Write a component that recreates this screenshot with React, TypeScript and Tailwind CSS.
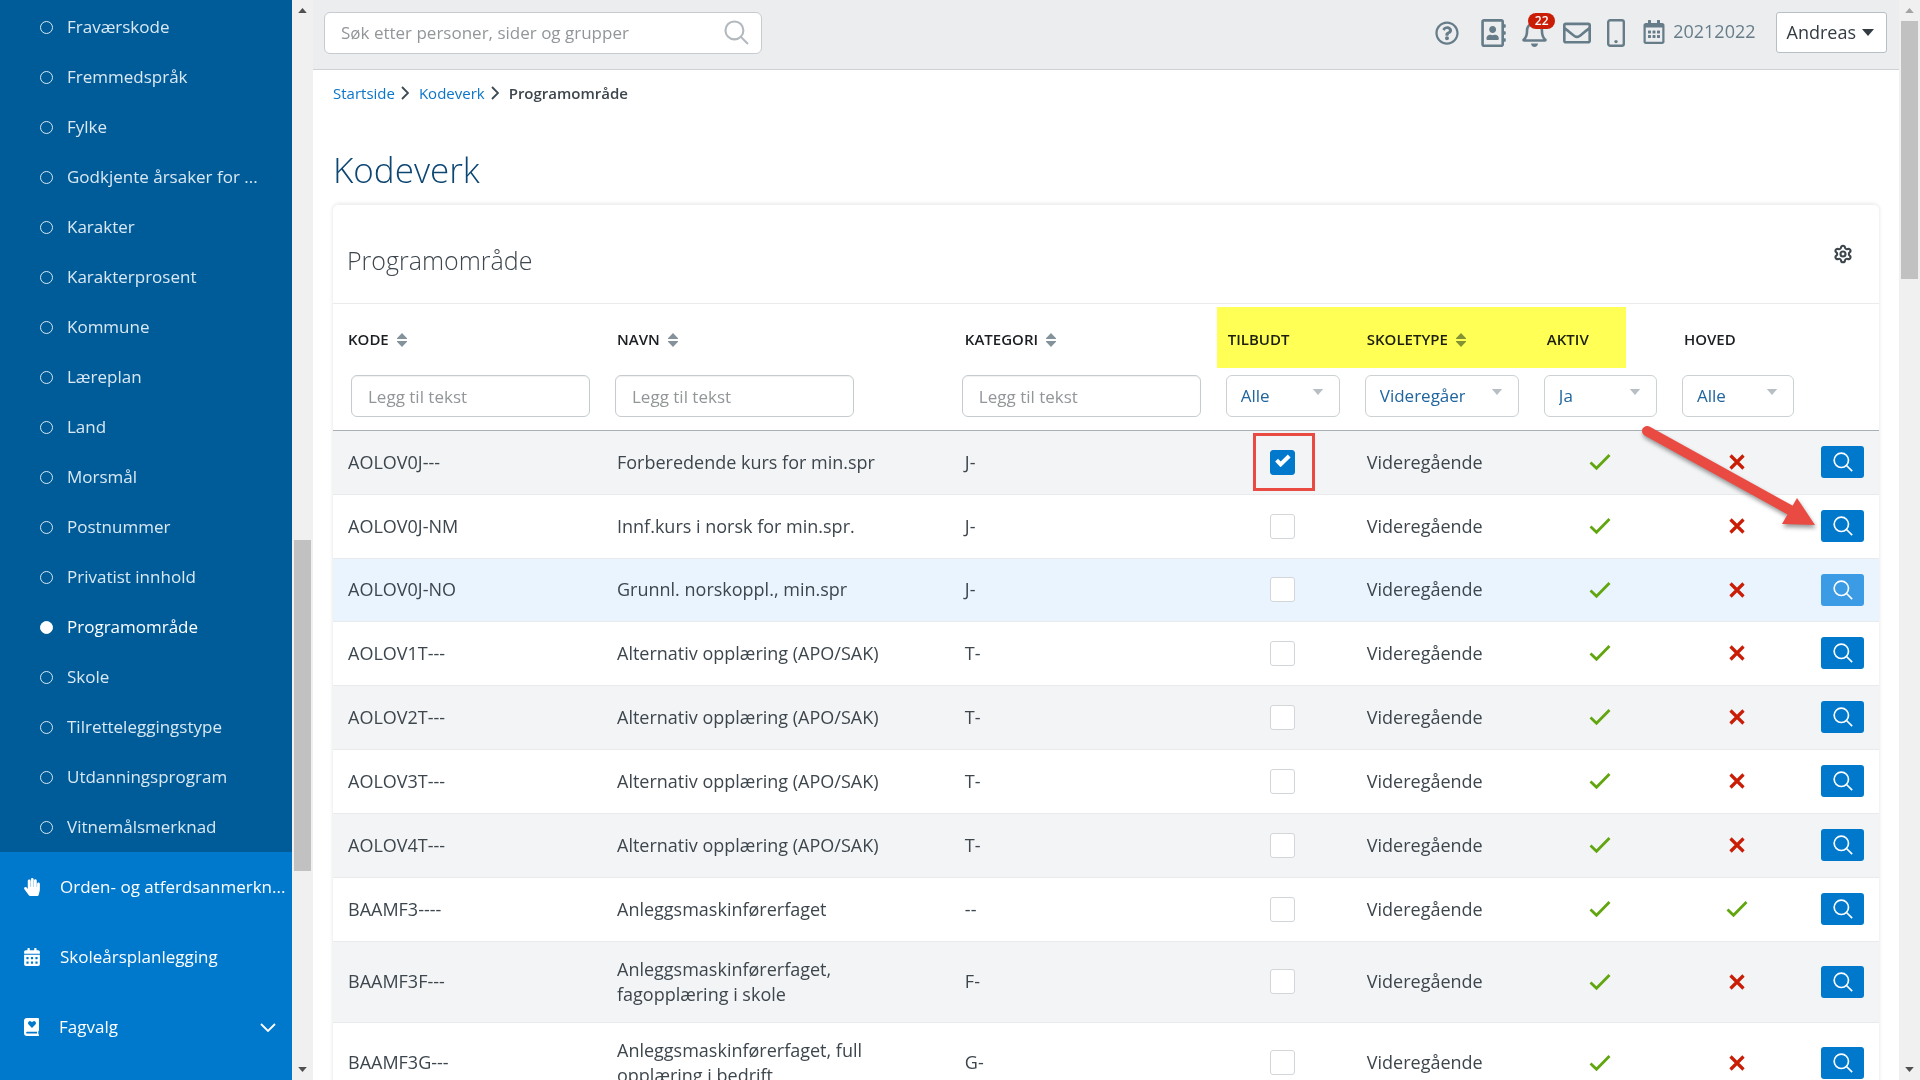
import { useState } from "react";
import {
  FaCalendarAlt,
  FaHandPaper,
  FaRegAddressBook,
  FaRegBell,
  FaRegCalendarAlt,
  FaRegEnvelope,
  FaRegQuestionCircle,
} from "react-icons/fa";
import { Settings } from "lucide-react";

const codeLists = [
  "Fraværskode",
  "Fremmedspråk",
  "Fylke",
  "Godkjente årsaker for ...",
  "Karakter",
  "Karakterprosent",
  "Kommune",
  "Læreplan",
  "Land",
  "Morsmål",
  "Postnummer",
  "Privatist innhold",
  "Programområde",
  "Skole",
  "Tilretteleggingstype",
  "Utdanningsprogram",
  "Vitnemålsmerknad",
];

type Row = { code: string; name: string; category: string; main?: boolean; hovered?: boolean };

const rows: Row[] = [
  { code: "AOLOV0J---", name: "Forberedende kurs for min.spr", category: "J-" },
  { code: "AOLOV0J-NM", name: "Innf.kurs i norsk for min.spr.", category: "J-" },
  { code: "AOLOV0J-NO", name: "Grunnl. norskoppl., min.spr", category: "J-", hovered: true },
  { code: "AOLOV1T---", name: "Alternativ opplæring (APO/SAK)", category: "T-" },
  { code: "AOLOV2T---", name: "Alternativ opplæring (APO/SAK)", category: "T-" },
  { code: "AOLOV3T---", name: "Alternativ opplæring (APO/SAK)", category: "T-" },
  { code: "AOLOV4T---", name: "Alternativ opplæring (APO/SAK)", category: "T-" },
  { code: "BAAMF3----", name: "Anleggsmaskinførerfaget", category: "--", main: true },
  { code: "BAAMF3F---", name: "Anleggsmaskinførerfaget, fagopplæring i skole", category: "F-" },
  { code: "BAAMF3G---", name: "Anleggsmaskinførerfaget, full opplæring i bedrift", category: "G-" },
];

function SearchIcon({ className }: { className: string }) {
  return (
    <svg viewBox="0 0 24 24" className={className} fill="none" stroke="currentColor" aria-hidden="true">
      <circle cx="10" cy="10" r="8.6" />
      <path d="M16.2 16.2 23 23" />
    </svg>
  );
}

function SortIcon() {
  return (
    <svg viewBox="0 0 10 14" className="h-3.5 w-2.5 text-[#84929c]" fill="currentColor" aria-hidden="true">
      <path d="M5 0 10 5.2V6H0v-.8ZM5 14l5-5.2V8H0v.8Z" />
    </svg>
  );
}

function CheckIcon() {
  return (
    <svg viewBox="0 0 22 18" className="mx-auto h-[18px] w-[22px]" fill="none" stroke="#62a60f" strokeWidth="2.8" role="img" aria-label="Ja">
      <path d="M1.5 9.5 7.5 15.3 20.5 2" />
    </svg>
  );
}

function CrossIcon() {
  return (
    <svg viewBox="0 0 16 16" className="mx-auto size-4" fill="none" stroke="#c91d05" strokeWidth="3.2" role="img" aria-label="Nei">
      <path d="m1.5 1.5 13 13M14.5 1.5l-13 13" />
    </svg>
  );
}

function HeartBookIcon() {
  return (
    <svg viewBox="0 0 15 18" className="h-[18px] w-[15px]" aria-hidden="true">
      <path fill="currentColor" d="M3 0h11a1 1 0 0 1 1 1v11.5l-.7.8v2.8l.7.7v.7a.5.5 0 0 1-.5.5H3a3 3 0 0 1-3-3V3a3 3 0 0 1 3-3Z" />
      <path fill="#0079cd" d="M8 10 4.6 6.6a2 2 0 0 1 2.8-2.9l.6.6.6-.6a2 2 0 0 1 2.8 2.9ZM3 13.7h10v1.7H3a.85.85 0 0 1 0-1.7Z" />
    </svg>
  );
}

function PhoneIcon() {
  return (
    <svg viewBox="0 0 18 28" className="h-7 w-[18px]" fill="none" stroke="currentColor" strokeWidth="2.4" aria-hidden="true">
      <rect x="1.2" y="1.2" width="15.6" height="25.6" rx="2" />
      <circle cx="9" cy="22.6" r="1.7" fill="currentColor" stroke="none" />
    </svg>
  );
}

function Caret({ className }: { className: string }) {
  return (
    <svg viewBox="0 0 12 7" className={className} fill="currentColor" aria-hidden="true">
      <path d="M0 0h12L6 7Z" />
    </svg>
  );
}

function Crumb({ label }: { label: string }) {
  return (
    <li className="flex items-center">
      <a href="#" className="text-[#0b75c9]">{label}</a>
      <svg viewBox="0 0 8 14" className="mr-2.5 ml-1.5 h-3.5 w-2" fill="none" stroke="#3d4a53" strokeWidth="1.8" aria-hidden="true">
        <path d="m1 1 6 6-6 6" />
      </svg>
    </li>
  );
}

function Scrollbar({ track, upper, lower, arrow }: { track: string; upper: string; lower: string; arrow: string }) {
  return (
    <div className="flex w-[21px] shrink-0 flex-col items-center bg-[#f0f0f0]" aria-hidden="true">
      <div className="flex h-[21px] items-center">
        <Caret className={"h-[5px] w-[9px] rotate-180 " + arrow} />
      </div>
      <div className={upper} />
      <div className={"w-[17px] bg-[#c1c1c1] " + track} />
      <div className={lower} />
      <div className="flex h-[21px] items-center">
        <Caret className="h-[5px] w-[9px] text-[#505050]" />
      </div>
    </div>
  );
}

function Filter({ label, value }: { label: string; value: string }) {
  return (
    <div className="relative">
      <select
        aria-label={label}
        defaultValue={value}
        className="block h-[42px] w-full appearance-none rounded-md border border-[#ccd1d4] bg-white pr-[53px] pl-3.5 text-[17px] text-[#20659e]"
      >
        <option>{value}</option>
      </select>
      <Caret className="pointer-events-none absolute top-3.5 right-4 h-1.5 w-3 text-[#b7bec4]" />
    </div>
  );
}

function TextFilter({ label }: { label: string }) {
  return (
    <input
      type="text"
      aria-label={label}
      placeholder="Legg til tekst"
      className="block h-[42px] w-[239px] max-w-full rounded-md border border-[#c6cbcf] bg-white px-4 text-[17px] shadow-[inset_0_1px_1px_rgba(0,0,0,0.06)] placeholder:text-[#929699]"
    />
  );
}

function Heading({ label, sortable }: { label: string; sortable?: boolean }) {
  return (
    <th scope="col" className="h-[71px] pl-[15px] text-left align-middle text-[15px] font-semibold text-[#1b1f23]">
      <span className="flex items-center gap-2">
        {label}
        {sortable && <SortIcon />}
      </span>
    </th>
  );
}

function TableRow({ row, index }: { row: Row; index: number }) {
  const [offered, setOffered] = useState(index === 0);
  const background = row.hovered
    ? "h-[63px] bg-[#eaf4fe]"
    : index % 2 === 0
      ? "h-16 bg-[#f3f4f6]"
      : "h-16 bg-white";
  return (
    <tr className={"border-b border-[#e8eaec] " + background}>
      <td className="pl-[15px]">{row.code}</td>
      <td className="py-[15px] pr-[60px] pl-[15px] leading-[25px]">{row.name}</td>
      <td className="pl-[15px]">{row.category}</td>
      <td className="pl-[57px]">
        <label className="relative block size-[25px]">
          <input
            type="checkbox"
            aria-label={"Tilbudt " + row.code}
            checked={offered}
            onChange={() => setOffered(!offered)}
            className="block size-[25px] appearance-none rounded-[3px] border border-[#d3d6d9] bg-white checked:border-[#0079cd] checked:bg-[#0079cd]"
          />
          {offered && (
            <svg viewBox="0 0 16 13" className="pointer-events-none absolute top-1 left-[5px] h-[13px] w-4" fill="none" stroke="#fff" strokeWidth="4" aria-hidden="true">
              <path d="m1.6 6.2 4 4.2L14.2 2" />
            </svg>
          )}
          {index === 0 && (
            <span className="pointer-events-none absolute -top-[17px] -left-[17px] h-[58px] w-[62px] border-3 border-[#e94b43]" />
          )}
        </label>
      </td>
      <td className="pl-[15px]">Videregående</td>
      <td><CheckIcon /></td>
      <td>{row.main ? <CheckIcon /> : <CrossIcon />}</td>
      <td className="pr-[15px]">
        <button
          type="button"
          aria-label={"Vis " + row.code}
          className={
            "ml-auto flex h-8 w-[43px] items-center justify-center rounded-[3px] text-white " +
            (row.hovered ? "bg-[#3b9be4]" : "bg-[#0079cd]")
          }
        >
          <SearchIcon className="size-5 stroke-2" />
        </button>
      </td>
    </tr>
  );
}

export default function App() {
  return (
    <div className="flex h-screen overflow-hidden bg-white font-['Open_Sans',sans-serif] text-[18px] text-[#3d464d]">
      <nav aria-label="Hovedmeny" className="w-[292px] shrink-0 overflow-hidden bg-[#0079cd] text-[17px] whitespace-nowrap text-white">
        <ul className="bg-[#005c99] pt-0.5">
          {codeLists.map((item) => {
            const active = item === "Programområde";
            return (
              <li key={item}>
                <a href="#" className={"flex h-[50px] items-center gap-3.5 pl-10 " + (active ? "text-white" : "text-[#d9e8f3]")}>
                  <span className={"size-[13px] rounded-full border " + (active ? "border-white bg-white" : "border-[#d9e8f3]")} />
                  {item}
                </a>
              </li>
            );
          })}
        </ul>
        <ul>
          <li>
            <a href="#" className="flex h-[70px] items-center gap-5 pl-6">
              <FaHandPaper className="h-[18px] w-4" />
              Orden- og atferdsanmerkn...
            </a>
          </li>
          <li>
            <a href="#" className="flex h-[70px] items-center gap-5 pl-6">
              <FaCalendarAlt className="h-[18px] w-4" />
              Skoleårsplanlegging
            </a>
          </li>
          <li>
            <a href="#" className="flex h-[70px] items-center gap-5 pr-4 pl-6">
              <HeartBookIcon />
              <span className="flex-1">Fagvalg</span>
              <svg viewBox="0 0 16 9" className="h-[9px] w-4" fill="none" stroke="currentColor" strokeWidth="1.8" aria-hidden="true">
                <path d="m1 1 7 7 7-7" />
              </svg>
            </a>
          </li>
        </ul>
      </nav>
      <Scrollbar upper="flex-[519]" track="flex-[331]" lower="flex-[188]" arrow="text-[#505050]" />

      <div className="flex min-w-0 flex-1 flex-col">
        <header className="flex h-[70px] shrink-0 items-start justify-between border-b border-[#cfd2d4] bg-[#ecedef] pt-3 pr-3 pl-[11px]">
          <form role="search" className="relative w-[438px]">
            <input
              type="search"
              aria-label="Søk"
              placeholder="Søk etter personer, sider og grupper"
              className="block h-[42px] w-full rounded-md border border-[#c6cbcf] bg-white pr-14 pb-0.5 pl-4 text-[17px] placeholder:text-[#929699]"
            />
            <button type="submit" aria-label="Søk" className="absolute top-2 right-[13px] text-[#b1b8be]">
              <SearchIcon className="size-[25px] stroke-2" />
            </button>
          </form>
          <div className="flex h-[41px] items-center text-[#667d89]">
            <button type="button" aria-label="Hjelp" className="mr-[22px]"><FaRegQuestionCircle className="size-6" /></button>
            <button type="button" aria-label="Kontakter" className="mr-4"><FaRegAddressBook className="h-7 w-[25px]" /></button>
            <button type="button" aria-label="Varsler" className="relative mr-4">
              <FaRegBell className="h-7 w-[25px]" />
              <span className="absolute -top-1.5 left-1.5 flex h-4 w-[27px] items-center justify-center rounded-full bg-[#c91d05] text-[12px] font-semibold text-white">22</span>
            </button>
            <button type="button" aria-label="Meldinger" className="mr-4"><FaRegEnvelope className="size-7" /></button>
            <button type="button" aria-label="Mobil" className="mr-[18px]"><PhoneIcon /></button>
            <button type="button" className="mr-5 flex items-center gap-2 pb-0.5">
              <FaRegCalendarAlt className="h-6 w-[22px]" />
              20212022
            </button>
            <button type="button" className="flex h-[41px] items-center gap-1.5 rounded-[3px] border border-[#b7bec4] bg-white pr-3 pl-2.5 text-[#333c43]">
              Andreas
              <Caret className="h-[7px] w-3" />
            </button>
          </div>
        </header>

        <main className="min-h-0 flex-1 overflow-hidden px-5 pt-[11px]">
          <nav aria-label="Brødsmulesti">
            <ol className="flex h-6 items-center text-[15px]">
              <Crumb label="Startside" />
              <Crumb label="Kodeverk" />
              <li className="font-semibold" aria-current="page">Programområde</li>
            </ol>
          </nav>
          <h1 className="mt-[53px] mb-[22px] text-[35px] leading-6 font-light text-[#0c4673]">Kodeverk</h1>

          <section className="relative rounded-t-md border-t border-[#f0f0f0] shadow-[0_0_4px_rgba(0,0,0,0.12)]">
            <div className="flex h-[99px] items-center justify-between border-b border-[#e9ebec] pr-[26px] pl-3.5">
              <h2 className="pt-3 text-[25px] leading-8 font-light">Programområde</h2>
              <button type="button" aria-label="Innstillinger"><Settings className="size-5 stroke-[2.5]" /></button>
            </div>
            <table className="w-full table-fixed border-collapse text-left">
              <colgroup>
                <col className="w-[17.4%]" />
                <col className="w-[22.5%]" />
                <col className="w-[17%]" />
                <col className="w-[139px]" />
                <col className="w-[180px]" />
                <col className="w-[137px]" />
                <col className="w-[137px]" />
                <col className="w-[73px]" />
              </colgroup>
              <thead>
                <tr>
                  <Heading label="KODE" sortable />
                  <Heading label="NAVN" sortable />
                  <Heading label="KATEGORI" sortable />
                  <Heading label="TILBUDT" />
                  <Heading label="SKOLETYPE" sortable />
                  <Heading label="AKTIV" />
                  <Heading label="HOVED" />
                  <td />
                </tr>
                <tr className="h-[55px] border-b border-[#a9afb4] align-top font-normal">
                  <td className="pl-[18px]"><TextFilter label="Kode" /></td>
                  <td className="pl-[13px]"><TextFilter label="Navn" /></td>
                  <td className="pl-3"><TextFilter label="Kategori" /></td>
                  <td className="pr-3 pl-[13px]"><Filter label="Tilbudt" value="Alle" /></td>
                  <td className="pr-[13px] pl-[13px]"><Filter label="Skoletype" value="Videregående" /></td>
                  <td className="pr-3 pl-3"><Filter label="Aktiv" value="Ja" /></td>
                  <td className="pr-3 pl-[13px]"><Filter label="Hoved" value="Alle" /></td>
                  <td />
                </tr>
              </thead>
              <tbody>
                {rows.map((row, index) => (
                  <TableRow key={row.code} row={row} index={index} />
                ))}
              </tbody>
            </table>
            <div className="pointer-events-none absolute top-[102px] right-[253px] h-[61px] w-[409px] bg-[#ffff55] mix-blend-multiply" />
            <svg viewBox="0 0 190 130" className="pointer-events-none absolute top-[210px] right-[54px] h-[130px] w-[190px] drop-shadow-[1px_3px_2px_rgba(0,0,0,0.4)]" aria-hidden="true">
              <path d="M12 16 155 95" stroke="#e94b43" strokeWidth="10" strokeLinecap="round" />
              <path d="M162 83 180 110 147 109Z" fill="#e94b43" />
            </svg>
          </section>
        </main>
      </div>
      <Scrollbar upper="flex-[0]" track="flex-[258]" lower="flex-[780]" arrow="text-[#a3a3a3]" />
    </div>
  );
}
